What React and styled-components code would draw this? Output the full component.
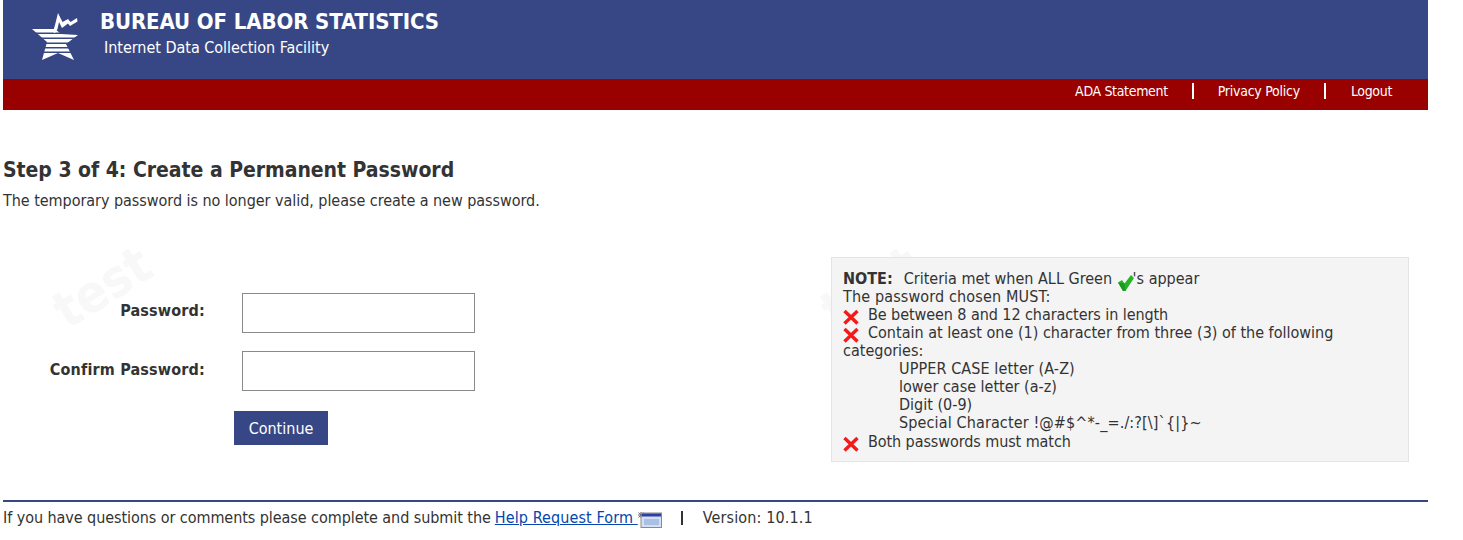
import React from "react";
import styled, { createGlobalStyle } from "styled-components";

const Global = createGlobalStyle`
  html, body { margin: 0; padding: 0; background: #fff; }
  body { font-family: "DejaVu Sans", Tahoma, sans-serif; font-stretch: condensed; font-size: 16px; color: #333; }
`;
const Page = styled.div`
  width: 1425px;
  margin-left: 3px;
  position: relative;
`;
const Banner = styled.header`
  height: 79px;
  background: #374785;
  display: flex;
  color: #fff;
`;
const LogoBox = styled.div`
  width: 97px;
  padding: 12px 0 0 28px;
  box-sizing: border-box;
`;
const BannerText = styled.div`
  padding-top: 8px;
`;
const Title = styled.div`
  font-size: 22px;
  font-weight: 700;
  line-height: 27px;
  letter-spacing: -0.1px;
`;
const Subtitle = styled.div`
  font-size: 16px;
  line-height: 20px;
  margin: 3px 0 0 4px;
  letter-spacing: -0.03px;
`;
const NavBar = styled.nav`
  height: 31px;
  box-sizing: border-box;
  padding: 0 36px 7px 0;
  background: #990000;
  display: flex;
  justify-content: flex-end;
  align-items: center;
`;
const NavLink = styled.span`
  color: #fff;
  font-size: 14px;
  line-height: 18px;
  letter-spacing: ${(p) => p.$ls}px;
`;
const NavSep = styled.span`
  width: 2px;
  height: 16px;
  background: #fff;
  margin: 0 ${(p) => p.$right}px 0 ${(p) => p.$left}px;
`;
const Heading = styled.h1`
  margin: 46px 0 0;
  font-size: 21px;
  line-height: 28px;
  font-weight: 700;
  letter-spacing: -0.03px;
  color: #333;
`;
const Intro = styled.p`
  margin: 7px 0 0;
  line-height: 20px;
  letter-spacing: -0.04px;
`;
const Main = styled.div`
  display: flex;
  justify-content: space-between;
  margin-top: 46px;
  height: 243px;
  position: relative;
`;
const Form = styled.form`
  position: relative;
  z-index: 1;
  padding-top: 36px;
  display: grid;
  grid-template-columns: 202px 233px;
  column-gap: 37px;
  grid-auto-rows: 40px;
  row-gap: 18px;
  align-content: start;
`;
const Label = styled.label`
  font-weight: 700;
  text-align: right;
  line-height: 34px;
  letter-spacing: 0.17px;
  padding-top: ${(p) => p.$top}px;
`;
const Field = styled.input`
  box-sizing: border-box;
  width: 233px;
  height: 40px;
  border: 1px solid #8a8a8a;
  background: #fff;
  padding: 0 6px;
`;
const Continue = styled.button`
  grid-column: 2;
  width: 94px;
  height: 34px;
  margin: 2px 0 0 -8px;
  background: #374785;
  color: #fff;
  border: 0;
  padding: 0;
  font: inherit;
  font-stretch: condensed;
  font-size: 16px;
`;
const Note = styled.aside`
  box-sizing: border-box;
  width: 578px;
  height: 205px;
  margin-right: 19px;
  padding: 12px 11px 0;
  background: #f4f4f4;
  border: 1px solid #e4e4e4;
  line-height: 18px;
  position: relative;
  z-index: 1;
`;
const NoteLine = styled.div`
  letter-spacing: ${(p) => p.$ls || 0}px;
  margin-top: ${(p) => p.$gap || 0}px;
`;
const SubLine = styled.div`
  padding-left: 56px;
  letter-spacing: ${(p) => p.$ls || 0}px;
`;
const Strong = styled.strong`
  font-weight: 700;
  margin-right: 11px;
`;
const IconX = styled.svg`
  width: 16px;
  height: 16px;
  vertical-align: -3px;
  margin: -2px 9px -2px 0;
`;
const IconCheck = styled.svg`
  width: 17px;
  height: 17px;
  vertical-align: -3px;
  margin: -4px -1px -4px 0;
`;
const Watermark = styled.span`
  position: absolute;
  font-size: 52px;
  font-weight: 700;
  color: #f8f8f8;
  transform: rotate(-32deg);
  left: ${(p) => p.$x}px;
  top: ${(p) => p.$y}px;
  line-height: 1;
`;
const Footer = styled.footer`
  border-top: 2px solid #374785;
  padding-top: 6px;
  line-height: 20px;
  display: flex;
  align-items: center;
`;
const FootText = styled.span`
  letter-spacing: -0.06px;
`;
const HelpLink = styled.a`
  color: #0645ad;
  text-decoration: underline;
  margin-left: 4px;
  white-space: pre;
  letter-spacing: 0.1px;
`;
const MailIcon = styled.svg`
  width: 24px;
  height: 16px;
  margin: 3px 0 0 0;
`;
const FootSep = styled.span`
  width: 2px;
  height: 14px;
  background: #333;
  margin: 0 20px 0 19px;
`;
const Version = styled.span`
  letter-spacing: 0.13px;
`;

const Logo = () => (
  <svg width="48" height="50" viewBox="0 0 48 50">
    <defs>
      <clipPath id="star">
        <path d="M1 17 H24 L30 22 L47 23 L35 32 L43 48 L27 41 L11 48 L16 30 Z" />
      </clipPath>
    </defs>
    <g clipPath="url(#star)" fill="#fff">
      <rect x="0" y="17" width="48" height="3.5" />
      <rect x="0" y="22" width="48" height="3.5" />
      <rect x="0" y="27" width="48" height="3.5" />
      <rect x="0" y="32" width="48" height="3" />
      <rect x="0" y="36.5" width="48" height="3" />
      <rect x="0" y="41" width="48" height="7" />
    </g>
    <path d="M22 20 L24 13 L27 1 L31.5 10 L37 7 L39.5 10 L46 6 L46.5 9.5 L39 14 L37 11.5 L31 16 L28 10 L26.5 17 L24 21 Z" fill="#fff" />
  </svg>
);
const X = () => (
  <IconX viewBox="0 0 16 16">
    <path d="M1.5 2 L14.5 14.5 M14.5 2 L1.5 14.5" stroke="#f41a1a" strokeWidth="3.4" fill="none" />
  </IconX>
);
const Check = () => (
  <IconCheck viewBox="0 0 17 17">
    <path d="M1 8.5 L5 6 L7.5 9.5 L14 1 L17 4 L8.5 17 L6 17 Z" fill="#26b526" />
    <path d="M1 8.5 L6 17 L8.5 17 L7.5 9.5 Z" fill="#1c9a1c" />
  </IconCheck>
);
const Mail = () => (
  <MailIcon viewBox="0 0 24 16">
    <path d="M0.5 0.5 L5.5 5.5 M5.5 0.5 L0.5 5.5 M3 0 V6 M0 3 H6" stroke="#444" strokeWidth="0.8" />
    <rect x="3" y="1" width="20.5" height="14.5" fill="#d4dff0" stroke="#8a8a8a" />
    <rect x="3.5" y="1.5" width="19.5" height="3" fill="#2a3fa8" />
    <rect x="6" y="7" width="15" height="6" fill="#a9bfe6" />
  </MailIcon>
);

export default function App() {
  return (
    <Page>
      <Global />
      <Banner>
        <LogoBox><Logo /></LogoBox>
        <BannerText>
          <Title>BUREAU OF LABOR STATISTICS</Title>
          <Subtitle>Internet Data Collection Facility</Subtitle>
        </BannerText>
      </Banner>
      <NavBar>
        <NavLink $ls={-0.33}>ADA Statement</NavLink>
        <NavSep $left={24} $right={24} />
        <NavLink $ls={-0.26}>Privacy Policy</NavLink>
        <NavSep $left={24} $right={25} />
        <NavLink $ls={-0.33}>Logout</NavLink>
      </NavBar>
      <Heading>Step 3 of 4: Create a Permanent Password</Heading>
      <Intro>The temporary password is no longer valid, please create a new password.</Intro>
      <Main>
        <Watermark $x={47} $y={4}>test</Watermark>
        <Watermark $x={815} $y={4}>test</Watermark>
        <Form>
          <Label htmlFor="pw" $top={1}>Password:</Label>
          <Field id="pw" type="password" />
          <Label htmlFor="cpw" $top={2}>Confirm Password:</Label>
          <Field id="cpw" type="password" />
          <Continue type="button">Continue</Continue>
        </Form>
        <Note>
          <NoteLine><Strong>NOTE:</Strong>Criteria met when ALL Green <Check />'s appear</NoteLine>
          <NoteLine $ls={0.14}>The password chosen MUST:</NoteLine>
          <NoteLine $ls={-0.07}><X />Be between 8 and 12 characters in length</NoteLine>
          <NoteLine><X />Contain at least one (1) character from three (3) of the following categories:</NoteLine>
          <SubLine $ls={0.1}>UPPER CASE letter (A-Z)</SubLine>
          <SubLine>lower case letter (a-z)</SubLine>
          <SubLine>Digit (0-9)</SubLine>
          <SubLine $ls={0.13}>Special Character !@#$^*-_=./:?[\]`{"{"}|{"}"}~</SubLine>
          <NoteLine $gap={1} $ls={-0.08}><X />Both passwords must match</NoteLine>
        </Note>
      </Main>
      <Footer>
        <FootText>If you have questions or comments please complete and submit the</FootText>
        <HelpLink href="#">Help Request Form </HelpLink>
        <Mail />
        <FootSep />
        <Version>Version: 10.1.1</Version>
      </Footer>
    </Page>
  );
}
